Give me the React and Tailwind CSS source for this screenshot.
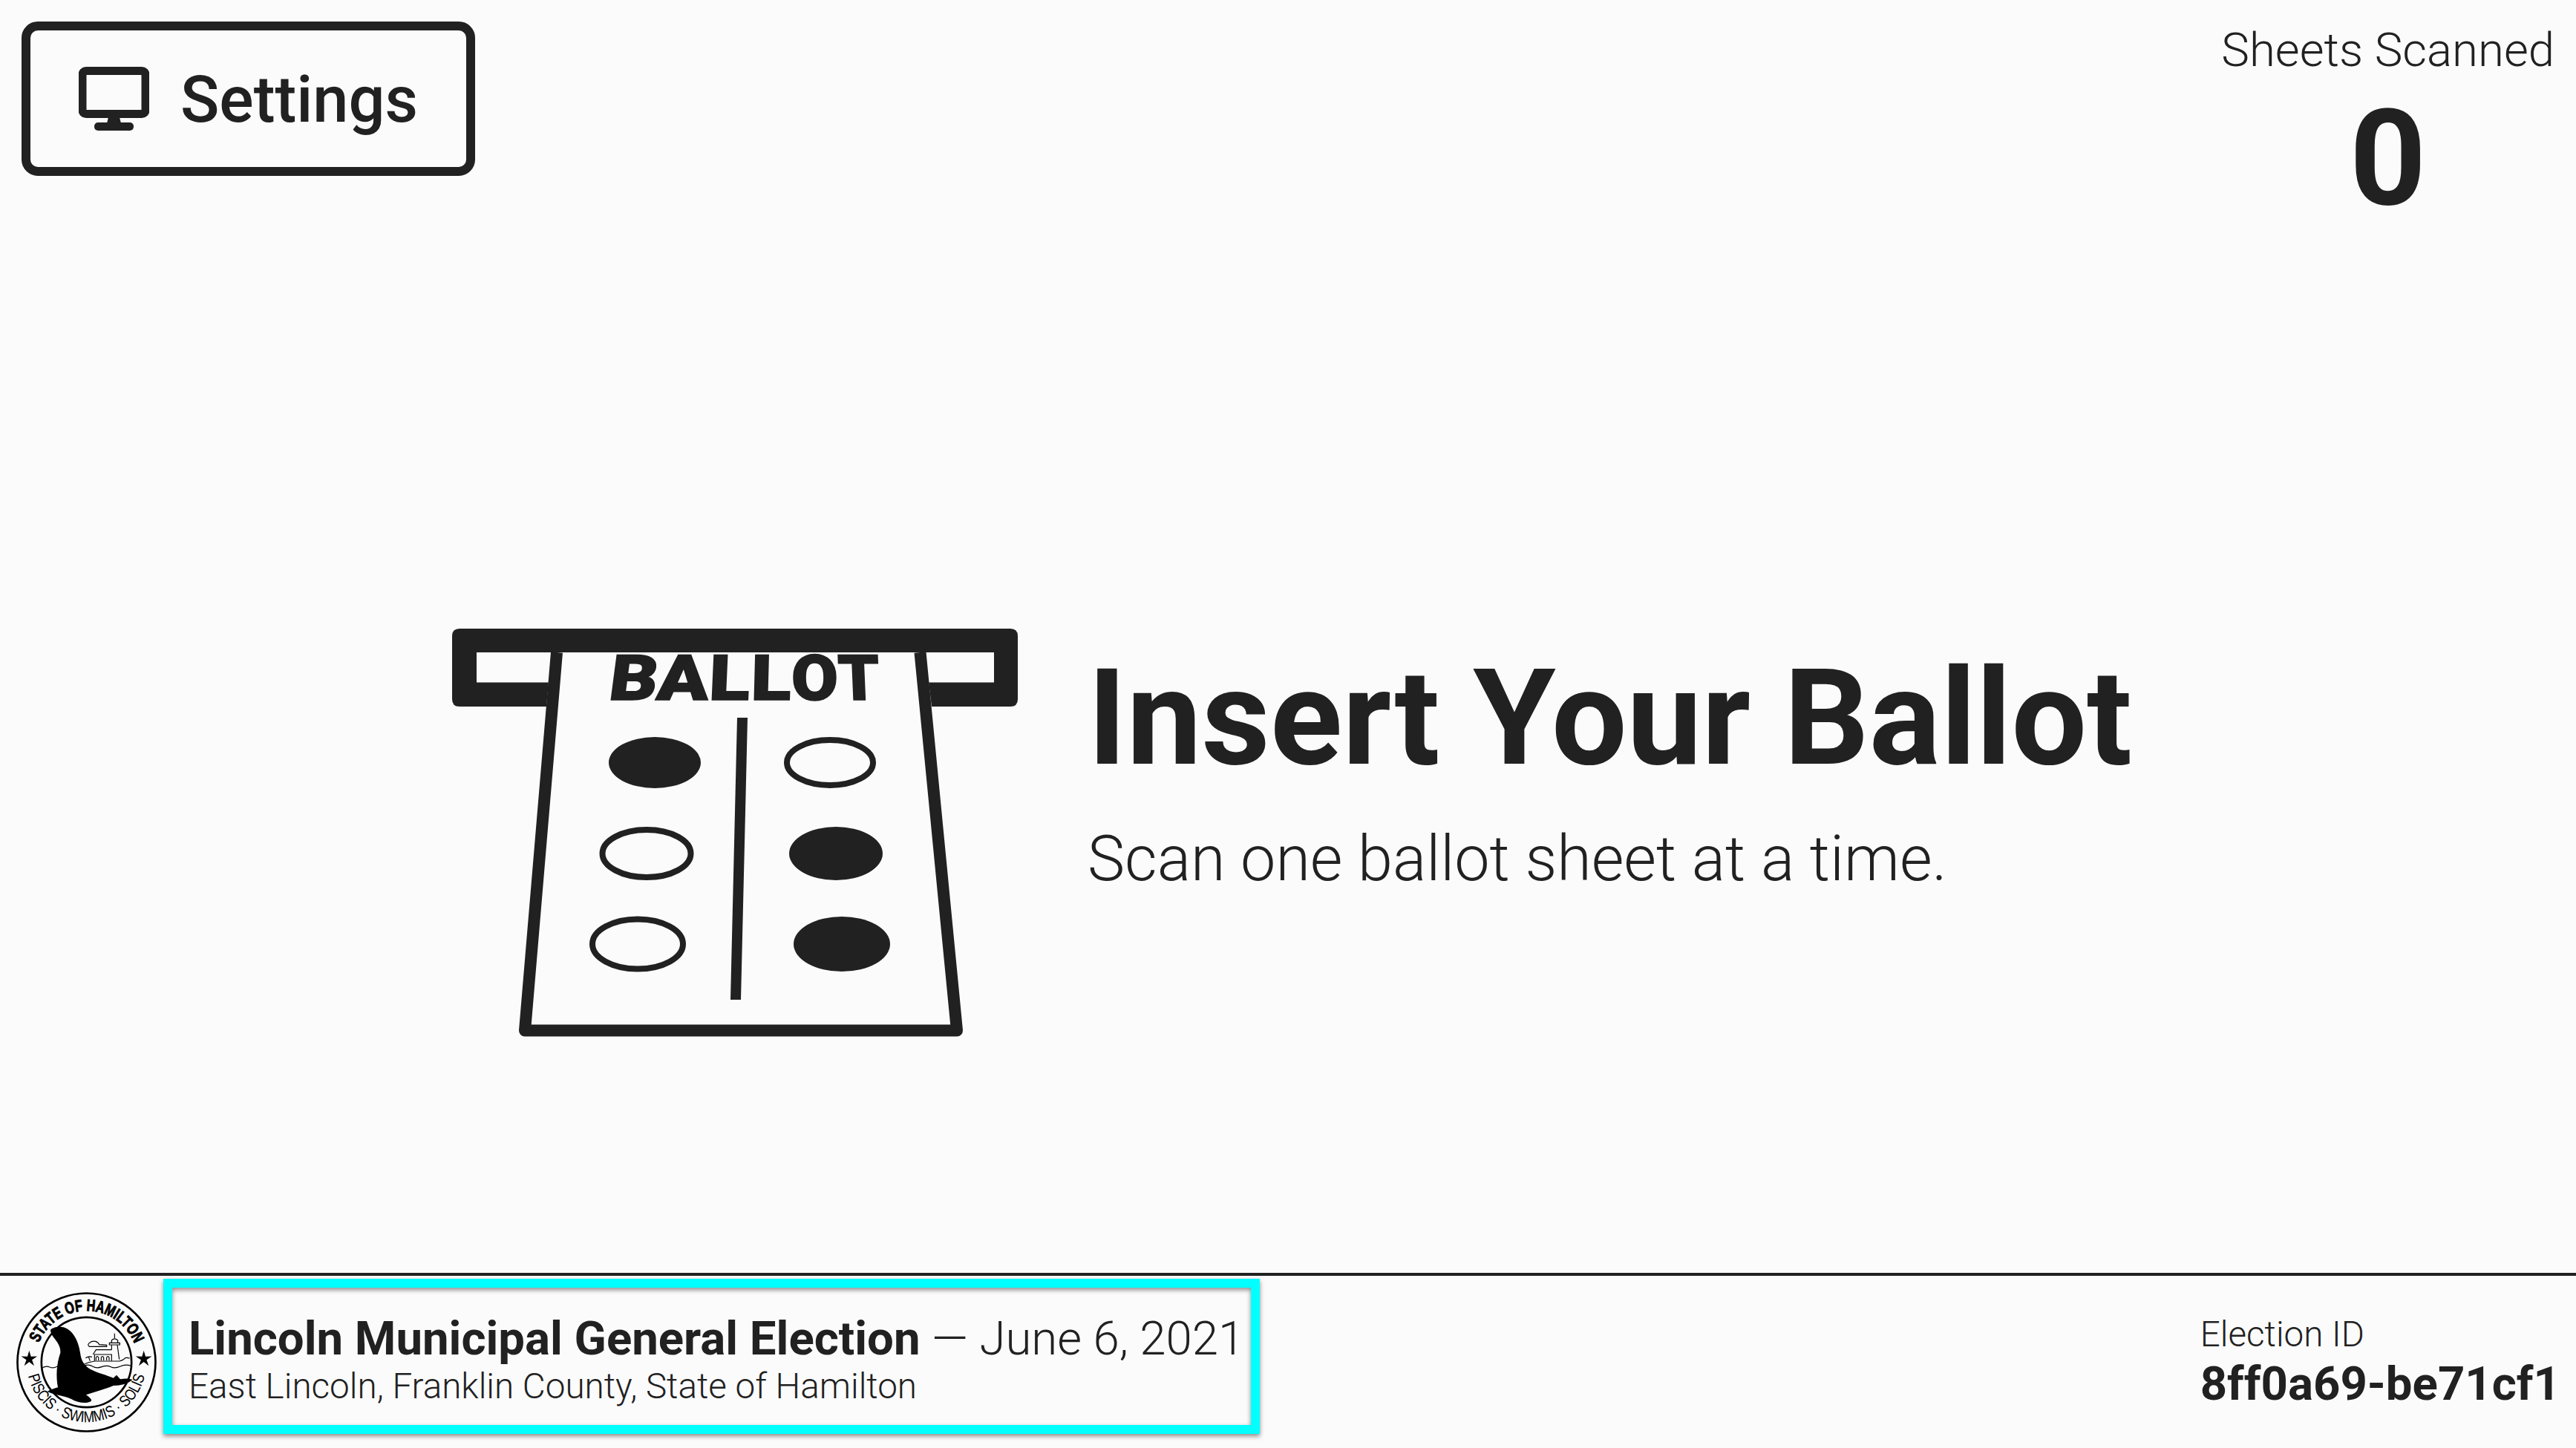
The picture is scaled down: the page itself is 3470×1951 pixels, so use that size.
import React from 'react';

const INK = '#212121';

const BALLOT_LETTERS = [
  { ch: 'B', x: 818, w: 65, skew: -7.5 },
  { ch: 'A', x: 883, w: 70, skew: -4 },
  { ch: 'L', x: 954, w: 55, skew: -2.5 },
  { ch: 'L', x: 1011, w: 54, skew: -1.5 },
  { ch: 'O', x: 1066, w: 63, skew: 0 },
  { ch: 'T', x: 1130, w: 56, skew: 2.4 },
];

function starPoints(cx, cy) {
  const pts = [];
  for (let i = 0; i < 10; i++) {
    const r = i % 2 === 0 ? 34 : 12;
    const a = (-90 + i * 36) * (Math.PI / 180);
    pts.push(`${cx + r * Math.cos(a)},${cy + r * Math.sin(a)}`);
  }
  return pts.join(' ');
}

function MonitorIcon() {
  return (
    <svg viewBox="106 90 95 86" className="w-[95px] h-[86px] shrink-0">
      <rect x="111" y="95.5" width="85" height="58" rx="5" fill="none" stroke={INK} strokeWidth="11" />
      <path d="M146 158 L161 158 L163 166 L144 166 Z" fill={INK} />
      <rect x="127" y="165" width="53" height="11" rx="5" fill={INK} />
    </svg>
  );
}

function BallotGraphic() {
  return (
    <svg viewBox="609 847 762 550" className="w-[762px] h-[550px] shrink-0">
      {/* scanner slot */}
      <path
        d="M619 847 H1361 Q1371 847 1371 857 V942 Q1371 952 1361 952 H1255 L1251 919.5 H1339 V879 H642 V919.5 H739 L736 952 H619 Q609 952 609 942 V857 Q609 847 619 847 Z"
        fill={INK}
      />
      {/* sheet */}
      <path
        d="M750 879 L707 1388.5 H1289 L1239.5 879"
        fill="none"
        stroke={INK}
        strokeWidth="16"
        strokeLinejoin="round"
      />
      {BALLOT_LETTERS.map((l, i) => (
        <text
          key={i}
          transform={`translate(${l.x} 942.5) skewX(${l.skew})`}
          textLength={l.w}
          lengthAdjust="spacingAndGlyphs"
          fontFamily="Roboto, sans-serif"
          fontWeight="900"
          fontSize="85"
          fill={INK}
          stroke={INK}
          strokeWidth="1.5"
        >
          {l.ch}
        </text>
      ))}
      <path d="M993 967 H1007 L998 1347 H984 Z" fill={INK} />
      <ellipse cx="882" cy="1027.5" rx="62" ry="34.5" fill={INK} />
      <ellipse cx="1118" cy="1027.5" rx="58" ry="30.5" fill="none" stroke={INK} strokeWidth="8" />
      <ellipse cx="871" cy="1150" rx="59.5" ry="32" fill="none" stroke={INK} strokeWidth="8" />
      <ellipse cx="1126" cy="1150" rx="63" ry="36" fill={INK} />
      <ellipse cx="859" cy="1272" rx="61" ry="33.5" fill="none" stroke={INK} strokeWidth="8" />
      <ellipse cx="1134" cy="1272" rx="65" ry="37" fill={INK} />
    </svg>
  );
}

function Seal() {
  return (
    <svg viewBox="0 0 567 567" className="w-[189px] h-[189px] shrink-0">
      <defs>
        <path id="seal-top" d="M90.6 205.6 A208 208 0 0 1 476.4 205.6" />
        <path id="seal-bottom" d="M47.7 338 A242 242 0 0 0 519.3 338" />
      </defs>
      <circle cx="283.5" cy="283.5" r="279" fill="none" stroke="#000" strokeWidth="8" />
      <circle cx="283.5" cy="283.5" r="182" fill="none" stroke="#000" strokeWidth="8" />
      <text
        fontFamily="'Liberation Sans Narrow', 'Liberation Sans', sans-serif"
        fontWeight="700"
        fontSize="66"
        fill="#000"
        stroke="#000"
        strokeWidth="3"
      >
        <textPath href="#seal-top" textLength="497" lengthAdjust="spacingAndGlyphs">STATE OF HAMILTON</textPath>
      </text>
      <text fontFamily="'Liberation Sans Narrow', 'Liberation Sans', sans-serif" fontSize="64" fill="#000">
        <textPath href="#seal-bottom" textLength="650" lengthAdjust="spacingAndGlyphs">PISCIS · SWIMMIS · SOLIS</textPath>
      </text>
      <polygon points={starPoints(52, 270)} fill="#000" />
      <polygon points={starPoints(515, 270)} fill="#000" />
      {/* shoreline and lighthouse */}
      <g fill="none" stroke="#000" strokeWidth="3.5">
        <path d="M105 306 Q120 296 135 303 T165 300" />
        <path d="M275 298 Q292 290 308 300 T345 302 T382 302 T420 300 T462 298" />
        <path d="M270 293 Q290 282 316 279 H416 Q435 274 440 266 Q450 264 458 268" />
        <path d="M316 278 V252 H385 V278 M310 252 L322 233 H385" />
        <path d="M322 276 V264 Q327 256 332 264 V276 M343 276 V264 Q348 256 353 264 V276 M365 276 V264 Q370 256 375 264 V276" />
        <path d="M385 213 V233 M408 213 L416 272 M376 205 H418 V213 H376 Z M385 205 V195 Q397 182 410 195 V205 M397 167 V186" />
        <path d="M295 220 Q285 212 296 205 Q305 196 320 199 Q332 203 335 212 L365 214 V220 Z" />
        <path d="M280 266 Q292 258 306 262 M292 262 L298 278" />
      </g>
      {/* sea lion */}
      <path
        d="M138 152 C150 140 185 135 205 148 C235 165 252 205 258 245 C262 275 272 295 300 312 C330 328 365 335 392 347 L405 335 L420 352 C440 348 455 348 470 354 C450 370 425 378 392 378 C360 392 320 402 282 415 C295 425 305 432 303 440 C285 452 250 448 222 432 C195 418 160 418 125 402 C140 392 155 390 168 385 C160 340 162 290 178 245 C180 220 165 200 150 182 C142 170 138 160 138 152 Z"
        fill="#000"
      />
    </svg>
  );
}

export default function App() {
  return (
    <div className="flex flex-col h-screen bg-[#fbfbfb] text-[#212121] font-['Roboto',sans-serif] overflow-hidden">
      {/* top row */}
      <div className="flex justify-between items-start pt-[29px] pl-[29px] pr-[29px]">
        <button className="flex items-center gap-[42px] w-[611px] h-[208px] pl-[65px] border-[12px] border-[#212121] rounded-[22px] text-[86.5px] font-medium">
          <MonitorIcon />
          <span className="pt-[3px]">Settings</span>
        </button>
        <div className="flex flex-col items-center pt-[1px]">
          <div className="text-[63.5px] leading-[76px] font-light">Sheets Scanned</div>
          <div className="text-[180px] leading-[180px] font-bold mt-[18px]">0</div>
        </div>
      </div>

      {/* main */}
      <div className="flex-1 flex items-start pl-[609px] pt-[543px]">
        <BallotGraphic />
        <div className="ml-[94px]">
          <h1 className="text-[180px] leading-[200px] font-bold mt-[21px]">Insert Your Ballot</h1>
          <p className="text-[84.5px] leading-[100px] font-light mt-[40px]">Scan one ballot sheet at a time.</p>
        </div>
      </div>

      {/* footer */}
      <div className="h-[236px] border-t-[4px] border-[#212121] flex items-start">
        <div className="ml-[22px] mt-[22px]">
          <Seal />
        </div>
        <div className="ml-[9px] mt-[4px] w-[1477px] h-[209px] border-[12px] border-[#00ffff] pl-[22px] pt-[32px] shadow-[0_3px_6px_rgba(0,0,0,0.45),inset_0_3px_6px_rgba(0,0,0,0.45)]">
          <div className="text-[63.5px] leading-[74px] whitespace-nowrap">
            <span className="font-bold">Lincoln Municipal General Election</span>
            <span className="font-light"> — June 6, 2021</span>
          </div>
          <div className="text-[47.6px] leading-[54px] font-light whitespace-nowrap">East Lincoln, Franklin County, State of Hamilton</div>
        </div>
        <div className="ml-auto mr-[21px] mt-[51px]">
          <div className="text-[47.6px] leading-[57px] font-light">Election ID</div>
          <div className="text-[63.5px] leading-[76px] font-bold whitespace-nowrap">8ff0a69-be71cf1</div>
        </div>
      </div>
    </div>
  );
}
